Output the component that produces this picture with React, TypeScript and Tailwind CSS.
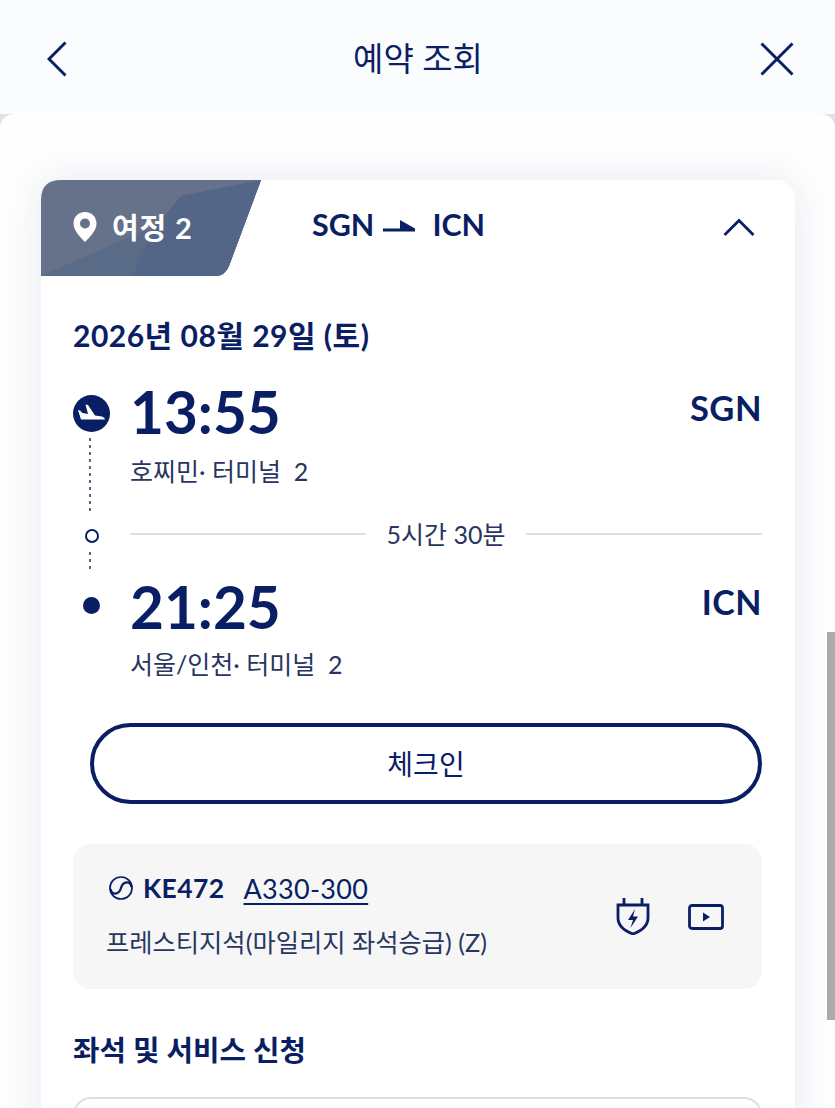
import React from "react";

const NAVY = "#0a1e64";
const font = { fontFamily: '"Lato", "Noto Sans CJK KR", sans-serif' };

function Plane({ className, color = NAVY }: { className?: string; color?: string }) {
  return (
    <svg viewBox="0 0 32 12" className={className}>
      <path d="M0 8.4H32V11.4H0Z M17 0L32 8.6H17Z" fill={color} />
    </svg>
  );
}

const dashes =
  "w-[2px] bg-[repeating-linear-gradient(to_bottom,#5c6684_0,#5c6684_3px,transparent_3px,transparent_7px)]";

export default function App() {
  return (
    <div className="relative h-[1108px] w-full overflow-hidden bg-[#dfe2ea]" style={font}>
      <header className="flex h-[114px] items-center justify-between bg-[#fbfcfe] pl-[47px] pr-[41px] text-[#0a1e64]">
        <svg width="20" height="36" viewBox="0 0 20 36" fill="none" stroke={NAVY} strokeWidth="3" className="mt-[3px]">
          <path d="M18.5 1.5L2 18L18.5 34.5" />
        </svg>
        <h1 className="mt-[2px] pl-[9px] text-[33px] font-normal leading-none">예약 조회</h1>
        <svg width="34" height="34" viewBox="0 0 34 34" fill="none" stroke={NAVY} strokeWidth="3" className="mt-[3px]">
          <path d="M1.5 1.5L32.5 32.5M32.5 1.5L1.5 32.5" />
        </svg>
      </header>

      <main className="h-[994px] rounded-t-[14px] bg-[#fefefe] pl-[41px] pr-[40px] pt-[66px]">
        <section className="h-[1100px] rounded-[18px] bg-white text-[#0a1e64] shadow-[0_0_42px_rgba(40,60,130,0.11)]">
          <div className="flex h-[96px] items-start">
            <div className="relative flex h-[96px] w-[220px] items-center pb-[2px] pl-[32px] text-white">
              <svg viewBox="0 0 220 96" className="absolute inset-0 h-full w-full">
                <path d="M0 96V20Q0 0 20 0H220L188 86Q184 96 174 96Z" fill="#667289" />
                <path d="M0 96L100 52L180 38L220 0L188 86Q184 96 174 96Z" fill="#5a6b88" />
                <path d="M92 96L112 50L140 16L220 0L188 86Q184 96 174 96Z" fill="#536687" />
              </svg>
              <svg width="24" height="30" viewBox="0 0 24 30" className="relative">
                <path fillRule="evenodd" d="M12 0C5 0 0.5 5.2 0.5 11.5C0.5 18.5 7 25 12 30C17 25 23.5 18.5 23.5 11.5C23.5 5.2 19 0 12 0ZM12 6.5A5 5 0 1 1 12 16.5A5 5 0 1 1 12 6.5Z" fill="white" />
              </svg>
              <span className="relative ml-[15px] whitespace-nowrap text-[29px] font-bold leading-none tracking-[0.9px]">여정 2</span>
            </div>
            <div className="flex h-[92px] flex-1 items-center pl-[51px] pr-[40px]">
              <span className="-mt-[4px] text-[30.5px] font-bold leading-none">SGN</span>
              <Plane className="ml-[9px] h-[12px] w-[32px]" />
              <span className="-mt-[4px] ml-[17px] text-[30.5px] font-bold leading-none">ICN</span>
              <svg width="32" height="18" viewBox="0 0 32 18" fill="none" stroke={NAVY} strokeWidth="2.8" className="ml-auto mt-[2px]">
                <path d="M1.5 17L16 2.5L30.5 17" />
              </svg>
            </div>
          </div>

          <div className="pl-[32px] pr-[33px]">
            <div className="flex h-[75px] items-end pb-[1px] text-[30px] font-bold leading-none tracking-[0.5px]">2026년 08월 29일 (토)</div>

            <div className="mt-[25px] flex">
              <div className="flex w-[37px] flex-col items-center">
                <div className="mt-[19px] flex h-[37px] w-[37px] items-center justify-center rounded-full bg-[#0a1e64]">
                  <svg viewBox="0 0 37 37" className="h-[37px] w-[37px]">
                    <path d="M5 15L7 15.5L9.5 18L15 19L12.5 9.5L15 10L22 20.5L29 21.5Q32 22.5 32 24.5L8 24.5Z" fill="white" />
                  </svg>
                </div>
                <div className={`-ml-[3px] mt-[6px] h-[77px] ${dashes}`} />
                <div className="mt-[14px] h-[14px] w-[14px] rounded-full border-2 border-[#0a1e64]" />
                <div className={`-ml-[3px] mt-[9px] h-[20px] ${dashes}`} />
                <div className="mt-[25px] h-[17px] w-[17px] rounded-full bg-[#0a1e64]" />
              </div>

              <div className="ml-[20px] flex-1">
                <div className="flex h-[70px] items-center justify-between">
                  <span className="text-[58.5px] font-bold leading-none">13:55</span>
                  <span className="-mt-[6px] text-[34.5px] font-bold leading-none tracking-[0.5px]">SGN</span>
                </div>
                <p className="mt-[8px] h-[34px] whitespace-nowrap text-[25px] font-normal leading-[34px] text-[#28365f]">호찌민· 터미널&nbsp; 2</p>
                <div className="mt-[29px] flex h-[34px] items-center gap-[21px] text-[25px] leading-none text-[#28365f]">
                  <div className="h-[2px] flex-1 bg-[#dedfe2]" />
                  <span className="whitespace-nowrap">5시간 30분</span>
                  <div className="h-[2px] flex-1 bg-[#dedfe2]" />
                </div>
                <div className="mt-[20px] flex h-[70px] items-center justify-between">
                  <span className="text-[58.5px] font-bold leading-none">21:25</span>
                  <span className="-mt-[8px] text-[34px] font-bold leading-none tracking-[0.5px]">ICN</span>
                </div>
                <p className="mt-[6px] h-[34px] whitespace-nowrap text-[25px] font-normal leading-[34px] text-[#28365f]">서울/인천· 터미널&nbsp; 2</p>
              </div>
            </div>

            <button className="ml-[17px] mt-[42px] flex h-[81px] w-[672px] items-center justify-center rounded-full border-4 border-[#0a1e64] text-[28px] leading-none text-[#0a1e64]">
              체크인
            </button>

            <div className="mt-[40px] flex h-[145px] items-center justify-between rounded-[18px] bg-[#f6f6f7] pl-[33px] pr-[38px]">
              <div className="-mt-[3px]">
                <div className="flex items-center">
                  <svg width="26" height="26" viewBox="0 0 26 26" fill="none" className="ml-[2px]">
                    <circle cx="13" cy="13" r="11" stroke={NAVY} strokeWidth="1.7" />
                    <path d="M2.5 14C3.5 20.5 11 20 13 13C15 6 22.5 5.5 23.5 12" stroke={NAVY} strokeWidth="2.3" />
                  </svg>
                  <span className="ml-[9px] text-[26.5px] font-bold leading-none tracking-[0.4px]">KE472</span>
                  <span className="ml-[19px] text-[27px] leading-none tracking-[0.3px] underline underline-offset-[4px]">A330-300</span>
                </div>
                <p className="mt-[28px] whitespace-nowrap text-[25.3px] leading-none text-[#28365f]">프레스티지석(마일리지 좌석승급) (Z)</p>
              </div>
              <div className="flex items-center gap-[38px]">
                <svg width="34" height="38" viewBox="0 0 34 38" fill="none" stroke={NAVY} strokeWidth="2.8" className="-mt-[2px]">
                  <path d="M8 1V8M26 1V8M2 8H32V21C32 29 25 34 17 37C9 34 2 29 2 21Z" />
                  <path d="M19 12L12 23H17L14.5 31L22 19.5H17Z" fill={NAVY} stroke="none" />
                </svg>
                <svg width="36" height="26" viewBox="0 0 36 26" fill="none" stroke={NAVY} strokeWidth="2.8">
                  <rect x="1.5" y="1.5" width="33" height="23" rx="2.5" />
                  <path d="M15 8.5L22 13L15 17.5Z" fill={NAVY} stroke="none" />
                </svg>
              </div>
            </div>

            <h2 className="mt-[47px] text-[28.8px] font-bold leading-none">좌석 및 서비스 신청</h2>
            <div className="mt-[32px] h-[60px] rounded-t-[18px] border-2 border-[#dedfe2]" />
          </div>
        </section>
      </main>

      <div className="absolute right-0 top-[632px] h-[388px] w-[8px] bg-[#ababab]" />
    </div>
  );
}
